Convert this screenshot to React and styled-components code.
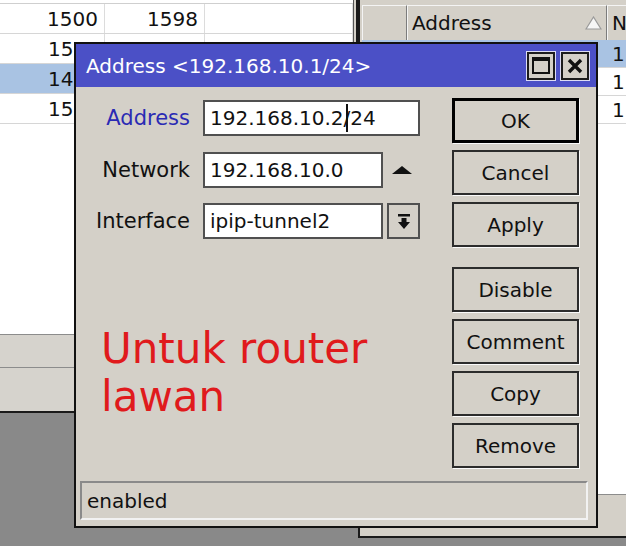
import React from "react";
import styled, { createGlobalStyle } from "styled-components";

const GlobalStyle = createGlobalStyle`
  html, body {
    margin: 0;
    padding: 0;
  }
  body {
    background: #898989;
    font-family: "DejaVu Sans", "Liberation Sans", sans-serif;
  }
`;

// rows of the table behind the dialog; only the visible part of the text is kept
const leftRows = [
  { a: "1500", b: "1598" },
  { a: "15" },
  { a: "14", selected: true },
  { a: "15" },
];

const rightRows = [{ selected: true }, {}, {}];

const Desktop = styled.div`
  position: relative;
  width: 626px;
  height: 546px;
  overflow: hidden;
  background: #898989;
  font-family: "DejaVu Sans", "Liberation Sans", sans-serif;
  color: #111;
`;

/* background windows */

const LeftWindow = styled.div`
  position: absolute;
  left: -2px;
  top: -2px;
  width: 360px;
  height: 415px;
  box-sizing: border-box;
  border: 2px solid #1a1a1a;
  background: #d4d0c8;
  display: flex;
  flex-direction: column;
  padding-right: 2px;
`;

const TableBody = styled.div`
  flex: 1;
  background: #fff;
  border-right: 1px solid #555;
  display: flex;
  flex-direction: column;
`;

const TableTop = styled.div`
  height: 3px;
  border-bottom: 1px solid #cfcfcf;
`;

const TableRow = styled.div`
  height: 30px;
  box-sizing: border-box;
  display: flex;
  border-bottom: 1px solid #d6d6d6;
  background: ${(p) => (p.$selected ? "#a9c3e3" : "#fff")};
  font-size: 20px;
`;

const Cell = styled.div`
  width: ${(p) => p.$w}px;
  flex: ${(p) => (p.$w ? "none" : 1)};
  box-sizing: border-box;
  border-right: 1px solid #dcdcdc;
  padding: 0 6px 0 ${(p) => p.$indent || 6}px;
  display: flex;
  align-items: center;
  justify-content: ${(p) => (p.$indent ? "flex-start" : "flex-end")};
  white-space: nowrap;
  overflow: hidden;
`;

const Band = styled.div`
  height: ${(p) => p.$h}px;
  border-top: 1px solid #8c8c8c;
  background: #d6d3cd;
`;

const RightWindow = styled.div`
  position: absolute;
  left: 358px;
  top: -3px;
  width: 272px;
  height: 541px;
  box-sizing: border-box;
  border: 2px solid #1a1a1a;
  background: #d4d0c8;
  padding: 6px 0 0 2px;
  display: flex;
  flex-direction: column;
`;

const HeaderRow = styled.div`
  height: 35px;
  display: flex;
  font-size: 20px;
`;

const HeaderCell = styled.div`
  width: ${(p) => p.$w}px;
  flex: ${(p) => (p.$w ? "none" : 1)};
  box-sizing: border-box;
  border-top: 1px solid #f4f4f4;
  border-left: 1px solid #f4f4f4;
  border-right: 1px solid #7c7c7c;
  padding: 0 4px;
  display: flex;
  align-items: center;
  justify-content: space-between;
  white-space: nowrap;
  overflow: hidden;
`;

const RightBody = styled.div`
  height: 454px;
  background: #fff;
`;

const RightRow = styled.div`
  height: 28px;
  box-sizing: border-box;
  border-bottom: 1px solid #d6d6d6;
  background: ${(p) => (p.$selected ? "#a9c3e3" : "#fff")};
  display: flex;
  align-items: center;
  padding-left: 250px;
  font-size: 20px;
  white-space: nowrap;
`;

const RightFoot = styled.div`
  flex: 1;
  border-top: 1px solid #8c8c8c;
`;

/* dialog */

const Dialog = styled.div`
  position: absolute;
  left: 74px;
  top: 42px;
  width: 524px;
  height: 486px;
  box-sizing: border-box;
  border: 2px solid #111;
  background: #d4d0c8;
  display: flex;
  flex-direction: column;
`;

const TitleBar = styled.div`
  height: 43px;
  flex: none;
  background: #4b50c6;
  color: #fff;
  font-size: 20px;
  display: flex;
  align-items: center;
  padding: 0 7px 0 10px;
  gap: 6px;
`;

const TitleText = styled.div`
  flex: 1;
  white-space: nowrap;
`;

const TitleButton = styled.div`
  width: 28px;
  height: 28px;
  box-sizing: border-box;
  border: 2px solid #1c1c1c;
  background: #d4d0c8;
  box-shadow: 0 0 0 1px #dcdcf4;
  display: flex;
  align-items: center;
  justify-content: center;
`;

const Body = styled.div`
  flex: 1;
  display: flex;
  padding: 11px 17px 0 9px;
`;

const FormColumn = styled.div`
  flex: 1;
  display: flex;
  flex-direction: column;
`;

const FieldRow = styled.div`
  height: 36px;
  margin-top: ${(p) => p.$top}px;
  display: flex;
  align-items: center;
  gap: 13px;
`;

const Label = styled.div`
  width: 105px;
  flex: none;
  text-align: right;
  font-size: 21px;
  color: ${(p) => (p.$active ? "#2a2ab4" : "#111")};
  white-space: nowrap;
  overflow: hidden;
`;

const Control = styled.div`
  display: flex;
  align-items: center;
  height: 100%;
`;

const Input = styled.div`
  width: ${(p) => p.$w}px;
  height: 36px;
  box-sizing: border-box;
  border: 2px solid #505050;
  background: #fff;
  padding-left: 5px;
  font-size: 20px;
  display: flex;
  align-items: center;
  white-space: nowrap;
`;

const Caret = styled.span`
  display: inline-block;
  width: 2px;
  height: 28px;
  background: #111;
  margin-right: -2px;
  position: relative;
  left: 2px;
`;

const SideIcon = styled.div`
  width: 37px;
  display: flex;
  justify-content: center;
`;

const DropButton = styled.div`
  width: 33px;
  height: 36px;
  margin-left: 4px;
  box-sizing: border-box;
  border: 2px solid #505050;
  background: #d4d0c8;
  display: flex;
  align-items: center;
  justify-content: center;
`;

const Note = styled.div`
  margin: 86px 0 0 16px;
  font-size: 42px;
  line-height: 48px;
  color: #e01a1c;
`;

const ButtonColumn = styled.div`
  width: 127px;
  display: flex;
  flex-direction: column;
  gap: 7px;
`;

const Button = styled.div`
  height: 45px;
  box-sizing: border-box;
  margin-top: ${(p) => (p.$separate ? 13 : 0)}px;
  border: ${(p) => (p.$default ? "3px solid #000" : "2px solid #2c2c2c")};
  box-shadow: 1px 1px 0 #fafafa;
  background: #d4d0c8;
  font-size: 20px;
  display: flex;
  align-items: center;
  justify-content: center;
`;

const StatusBar = styled.div`
  height: 39px;
  flex: none;
  margin: 0 8px 6px 4px;
  box-sizing: border-box;
  border: 2px solid;
  border-color: #8a8a8a #f2f2f2 #f2f2f2 #8a8a8a;
  padding-left: 5px;
  font-size: 20px;
  display: flex;
  align-items: center;
`;

const MaximizeIcon = () => (
  <svg width="18" height="17" viewBox="0 0 18 17">
    <rect x="1" y="1" width="16" height="15" fill="none" stroke="#111" strokeWidth="2" />
    <rect x="1" y="1" width="16" height="3" fill="#111" />
  </svg>
);

const CloseIcon = () => (
  <svg width="16" height="16" viewBox="0 0 16 16">
    <path d="M2 2 L14 14 M14 2 L2 14" stroke="#111" strokeWidth="3.4" />
  </svg>
);

const UpTriangle = () => (
  <svg width="20" height="8" viewBox="0 0 20 8">
    <polygon points="0,8 10,0 20,8" fill="#111" />
  </svg>
);

const DropIcon = () => (
  <svg width="14" height="17" viewBox="0 0 14 17">
    <rect x="1" y="1" width="12" height="2.5" fill="#111" />
    <polygon points="4.5,5 9.5,5 9.5,9 13,9 7,16 1,9 4.5,9" fill="#111" />
  </svg>
);

const SortIcon = () => (
  <svg width="17" height="14" viewBox="0 0 17 14">
    <polygon points="1,13 8.5,1 16,13" fill="#f6f6f6" stroke="#9a9a9a" strokeWidth="1.2" />
  </svg>
);

export default function App() {
  return (
    <Desktop>
      <GlobalStyle />

      <RightWindow>
        <HeaderRow>
          <HeaderCell $w={45} />
          <HeaderCell $w={200}>
            Address
            <SortIcon />
          </HeaderCell>
          <HeaderCell>N</HeaderCell>
        </HeaderRow>
        <RightBody>
          {rightRows.map((r, i) => (
            <RightRow key={i} $selected={r.selected}>
              1'
            </RightRow>
          ))}
        </RightBody>
        <RightFoot />
      </RightWindow>

      <LeftWindow>
        <TableBody>
          <TableTop />
          {leftRows.map((r, i) => (
            <TableRow key={i} $selected={r.selected}>
              <Cell $w={105} $indent={r.b ? 0 : 48}>
                {r.a}
              </Cell>
              <Cell $w={100}>{r.b}</Cell>
              <Cell />
            </TableRow>
          ))}
        </TableBody>
        <Band $h={32} />
        <Band $h={43} />
      </LeftWindow>

      <Dialog>
        <TitleBar>
          <TitleText>Address &lt;192.168.10.1/24&gt;</TitleText>
          <TitleButton>
            <MaximizeIcon />
          </TitleButton>
          <TitleButton>
            <CloseIcon />
          </TitleButton>
        </TitleBar>

        <Body>
          <FormColumn>
            <FieldRow $top={2}>
              <Label $active>Address</Label>
              <Input $w={217}>
                192.168.10.2
                <Caret />
                /24
              </Input>
            </FieldRow>
            <FieldRow $top={16}>
              <Label>Network</Label>
              <Control>
                <Input $w={180}>192.168.10.0</Input>
                <SideIcon>
                  <UpTriangle />
                </SideIcon>
              </Control>
            </FieldRow>
            <FieldRow $top={15}>
              <Label>Interface</Label>
              <Control>
                <Input $w={180}>ipip-tunnel2</Input>
                <DropButton>
                  <DropIcon />
                </DropButton>
              </Control>
            </FieldRow>
            <Note>
              Untuk router
              <br />
              lawan
            </Note>
          </FormColumn>

          <ButtonColumn>
            <Button $default>OK</Button>
            <Button>Cancel</Button>
            <Button>Apply</Button>
            <Button $separate>Disable</Button>
            <Button>Comment</Button>
            <Button>Copy</Button>
            <Button>Remove</Button>
          </ButtonColumn>
        </Body>

        <StatusBar>enabled</StatusBar>
      </Dialog>
    </Desktop>
  );
}
